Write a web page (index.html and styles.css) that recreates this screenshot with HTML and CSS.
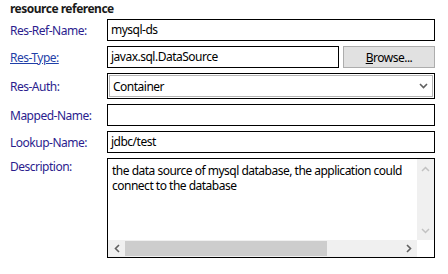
FILE: index.html
```html
<!DOCTYPE html>
<html lang="en">
<head>
    <meta charset="UTF-8">
    <title>resource reference</title>
    <link rel="stylesheet" href="styles.css">
</head>
<body>
    <div class="section">
        <div class="section-title">resource reference</div>
        <div class="form">
            <div class="label">Res-Ref-Name:</div>
            <div class="textbox">mysql-ds</div>

            <div class="label"><a class="link" href="#">Res-Type:</a></div>
            <div class="field-with-button">
                <div class="textbox type-box">javax.sql.DataSource</div>
                <button class="browse-button"><u>B</u>rowse...</button>
            </div>

            <div class="label">Res-Auth:</div>
            <div class="combo">
                <span>Container</span>
                <svg class="combo-arrow" width="9" height="6" viewBox="0 0 9 6">
                    <path d="M1 1 L4.5 4.5 L8 1" fill="none" stroke="#606060" stroke-width="1.6"/>
                </svg>
            </div>

            <div class="label">Mapped-Name:</div>
            <div class="textbox"></div>

            <div class="label">Lookup-Name:</div>
            <div class="textbox">jdbc/test</div>

            <div class="label label-top">Description:</div>
            <div class="textarea">
                <div class="textarea-text">
                    <div>the data source of mysql database, the application could</div>
                    <div>connect to the database</div>
                </div>
                <div class="vscroll">
                    <svg width="9" height="6" viewBox="0 0 9 6"><path d="M1 5 L4.5 1.5 L8 5" fill="none" stroke="#c2c2c2" stroke-width="1.5"/></svg>
                    <svg width="9" height="6" viewBox="0 0 9 6"><path d="M1 1 L4.5 4.5 L8 1" fill="none" stroke="#c2c2c2" stroke-width="1.5"/></svg>
                </div>
                <div class="hscroll">
                    <svg class="h-arrow" width="6" height="9" viewBox="0 0 6 9"><path d="M5 1 L1.5 4.5 L5 8" fill="none" stroke="#606060" stroke-width="1.6"/></svg>
                    <div class="h-track"><div class="h-thumb"></div></div>
                    <svg class="h-arrow" width="6" height="9" viewBox="0 0 6 9"><path d="M1 1 L4.5 4.5 L1 8" fill="none" stroke="#606060" stroke-width="1.6"/></svg>
                </div>
                <div class="corner"></div>
            </div>
        </div>
    </div>
</body>
</html>
```

FILE: styles.css
```css
body {
    font-family: 'Noto Sans', 'Liberation Sans', sans-serif;
    font-size: 12px;
    letter-spacing: -0.5px;
    background-color: #fff;
    color: #000;
    margin: 0;
    padding: 0;
}
.section {
    padding: 2px 0 0 10px;
}
.section-title {
    font-weight: bold;
    color: #1a1a1a;
    line-height: 14px;
    height: 17px;
}
.form {
    display: grid;
    grid-template-columns: 97px 328px;
    row-gap: 5px;
}
.label {
    color: #2b1d8e;
    display: flex;
    align-items: center;
}
.label-top {
    align-items: flex-start;
    line-height: 16px;
    padding-top: 1px;
}
.link {
    color: #1f3fa8;
    text-decoration: underline;
}
.textbox {
    height: 22px;
    box-sizing: border-box;
    border: 1px solid #000;
    padding: 0 3px;
    line-height: 20px;
    white-space: nowrap;
}
.field-with-button {
    display: flex;
    gap: 4px;
}
.type-box {
    width: 232px;
}
.browse-button {
    width: 92px;
    height: 22px;
    box-sizing: border-box;
    border: 1px solid #adadad;
    background-color: #e1e1e1;
    font-family: inherit;
    font-size: 12px;
    letter-spacing: -0.5px;
    color: #000;
    padding: 0;
}
.combo {
    height: 26px;
    box-sizing: border-box;
    border: 1px solid #000;
    box-shadow: inset 0 0 0 1px #fff, inset 0 0 0 2px #b4b4b4;
    padding: 0 6px 0 5px;
    display: flex;
    align-items: center;
    justify-content: space-between;
}
.textarea {
    height: 100px;
    box-sizing: border-box;
    border: 1px solid #000;
    display: grid;
    grid-template-columns: 1fr 17px;
    grid-template-rows: 1fr 17px;
}
.textarea-text {
    padding: 4px 4px 0;
    line-height: 15px;
    white-space: nowrap;
    overflow: hidden;
}
.vscroll {
    background-color: #f0f0f0;
    display: flex;
    flex-direction: column;
    justify-content: space-between;
    align-items: center;
    padding: 7px 0 6px;
}
.hscroll {
    background-color: #f0f0f0;
    display: flex;
    align-items: center;
}
.h-arrow {
    flex-shrink: 0;
    margin: 0 5px 0 6px;
}
.h-track {
    flex: 1;
    height: 100%;
    display: flex;
    align-items: center;
}
.h-thumb {
    width: 202px;
    height: 15px;
    background-color: #cdcdcd;
}
.corner {
    background-color: #fff;
}
```
